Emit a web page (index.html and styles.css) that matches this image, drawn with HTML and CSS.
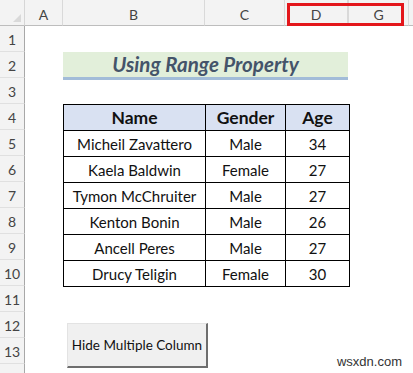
FILE: index.html
```html
<!DOCTYPE html>
<html lang="en">
  <head>
    <meta charset="UTF-8" />
    <meta name="viewport" content="width=device-width, initial-scale=1.0" />
    <title>Using Range Property</title>
    <link rel="stylesheet" href="styles.css">
  </head>
  <body>
    <div class="sheet">
      <!-- Column headers -->
      <div class="corner"><span class="corner-mark"></span></div>
      <div class="col-head">A</div>
      <div class="col-head">B</div>
      <div class="col-head">C</div>
      <div class="col-head">D</div>
      <div class="col-head col-g">G</div>
      <div class="col-head col-rest"></div>

      <!-- Row headers -->
      <div class="row-head r1">1</div>
      <div class="row-head r2">2</div>
      <div class="row-head r3">3</div>
      <div class="row-head r4">4</div>
      <div class="row-head r5">5</div>
      <div class="row-head r6">6</div>
      <div class="row-head r7">7</div>
      <div class="row-head r8">8</div>
      <div class="row-head r9">9</div>
      <div class="row-head r10">10</div>
      <div class="row-head r11">11</div>
      <div class="row-head r12">12</div>
      <div class="row-head r13">13</div>
      <div class="row-head r14"></div>

      <div class="title">Using Range Property</div>

      <table class="data">
        <colgroup>
          <col class="c-name">
          <col class="c-gender">
          <col class="c-age">
        </colgroup>
        <thead>
          <tr><th>Name</th><th>Gender</th><th>Age</th></tr>
        </thead>
        <tbody>
          <tr><td>Micheil Zavattero</td><td>Male</td><td>34</td></tr>
          <tr><td>Kaela Baldwin</td><td>Female</td><td>27</td></tr>
          <tr><td>Tymon McChruiter</td><td>Male</td><td>27</td></tr>
          <tr><td>Kenton Bonin</td><td>Male</td><td>26</td></tr>
          <tr><td>Ancell Peres</td><td>Male</td><td>27</td></tr>
          <tr><td>Drucy Teligin</td><td>Female</td><td>30</td></tr>
        </tbody>
      </table>

      <button class="macro-btn">Hide Multiple Column</button>

      <div class="highlight"></div>
      <div class="watermark">wsxdn.com</div>
    </div>
  </body>
</html>
```

FILE: styles.css
```css
* {
  margin: 0;
  padding: 0;
  box-sizing: border-box;
}

body {
  background-color: white;
  width: 413px;
  height: 373px;
  overflow: hidden;
  font-family: Lato, "Open Sans", sans-serif;
}

.sheet {
  position: relative;
  display: grid;
  grid-template-columns: 25px 38px 142px 80px 63px 61px 1fr;
  grid-template-rows: 26px repeat(14, 26px);
  width: 413px;
  height: 373px;
  overflow: hidden;
}

/* Headers */
.corner {
  grid-row: 1;
  grid-column: 1;
  background-color: #f3f3f3;
  border-bottom: 1px solid #bdbdbd;
  border-right: 1px solid #d6d6d6;
  position: relative;
}

.corner-mark {
  position: absolute;
  right: 3px;
  bottom: 3px;
  width: 0;
  height: 0;
  border-left: 8px solid transparent;
  border-bottom: 8px solid #d9d9d9;
}

.col-head {
  grid-row: 1;
  background-color: #f3f3f3;
  border-bottom: 1px solid #bdbdbd;
  border-right: 1px solid #d9d9d9;
  color: #444;
  font-size: 14px;
  display: flex;
  align-items: center;
  justify-content: center;
  padding-top: 3px;
}

.col-head.col-g {
  border-left: 1px solid #d9d9d9;
}

.col-head.col-rest {
  border-right: none;
}

.row-head {
  grid-column: 1;
  background-color: #f3f3f3;
  border-right: 1px solid #a8a8a8;
  border-bottom: 1px solid #e0e0e0;
  color: #444;
  font-size: 14px;
  display: flex;
  align-items: center;
  justify-content: center;
  padding-top: 1px;
}

.r1 { grid-row: 2; }
.r2 { grid-row: 3; }
.r3 { grid-row: 4; }
.r4 { grid-row: 5; }
.r5 { grid-row: 6; }
.r6 { grid-row: 7; }
.r7 { grid-row: 8; }
.r8 { grid-row: 9; }
.r9 { grid-row: 10; }
.r10 { grid-row: 11; }
.r11 { grid-row: 12; }
.r12 { grid-row: 13; }
.r13 { grid-row: 14; }
.r14 { grid-row: 15; }

/* Title band */
.title {
  grid-row: 3;
  grid-column: 3 / 6;
  height: 28px;
  background-color: #e2efda;
  border-bottom: 3px solid #a2bcd8;
  color: #44546a;
  font-size: 20.5px;
  font-weight: bold;
  font-style: italic;
  text-align: center;
  line-height: 25px;
}

/* Data table */
.data {
  grid-row: 5 / 12;
  grid-column: 3 / 6;
  border-collapse: collapse;
  width: 286px;
  height: 183px;
  table-layout: fixed;
  align-self: start;
}

.c-name { width: 142px; }
.c-gender { width: 80px; }
.c-age { width: 64px; }

.data th,
.data td {
  border: 1px solid #000;
  height: 26px;
  text-align: center;
  color: #111;
  white-space: nowrap;
}

.data th {
  background-color: #d9e1f2;
  font-size: 17.5px;
  font-weight: bold;
}

.data td {
  font-size: 15px;
}

/* Macro button */
.macro-btn {
  grid-row: 13 / 15;
  grid-column: 3 / 5;
  justify-self: start;
  width: 141px;
  height: 45px;
  margin-left: 4px;
  margin-top: 11px;
  background-color: #f0f0f0;
  border-top: 1px solid #e3e3e3;
  border-left: 1px solid #e3e3e3;
  border-right: 2px solid #6e6e6e;
  border-bottom: 2px solid #6e6e6e;
  font-family: Lato, "Open Sans", sans-serif;
  font-size: 13.5px;
  color: #111;
}

/* Overlays */
.highlight {
  position: absolute;
  left: 287px;
  top: 3px;
  width: 117px;
  height: 23px;
  border: 3px solid #e3161b;
}

.watermark {
  position: absolute;
  right: 11px;
  bottom: 4px;
  font-family: "Liberation Sans", Arial, sans-serif;
  font-size: 13px;
  color: #333;
}
```
